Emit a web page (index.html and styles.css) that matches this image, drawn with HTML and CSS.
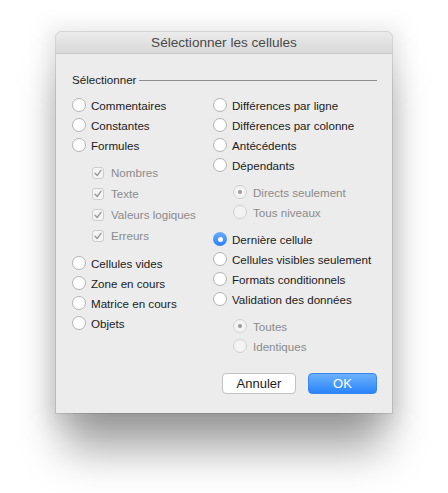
FILE: index.html
```html
<!DOCTYPE html>
<html lang="fr">
<head>
<meta charset="utf-8">
<link rel="stylesheet" href="styles.css">
</head>
<body>
<div class="window">
  <div class="titlebar">Sélectionner les cellules</div>
  <div class="content">
    <div class="group-head"><span>Sélectionner</span><span class="rule"></span></div>
    <div class="cols">
      <div class="col col-left">
        <div class="row"><span class="radio"></span>Commentaires</div>
        <div class="row"><span class="radio"></span>Constantes</div>
        <div class="row"><span class="radio"></span>Formules</div>
        <div class="sub">
          <div class="row crow dis"><span class="check"><svg viewBox="0 0 12 12" width="12" height="12"><path d="M3 6.2 L5.2 8.5 L9 3.3" fill="none" stroke="#9a9a9a" stroke-width="1.4" stroke-linecap="round" stroke-linejoin="round"/></svg></span>Nombres</div>
          <div class="row crow dis"><span class="check"><svg viewBox="0 0 12 12" width="12" height="12"><path d="M3 6.2 L5.2 8.5 L9 3.3" fill="none" stroke="#9a9a9a" stroke-width="1.4" stroke-linecap="round" stroke-linejoin="round"/></svg></span>Texte</div>
          <div class="row crow dis"><span class="check"><svg viewBox="0 0 12 12" width="12" height="12"><path d="M3 6.2 L5.2 8.5 L9 3.3" fill="none" stroke="#9a9a9a" stroke-width="1.4" stroke-linecap="round" stroke-linejoin="round"/></svg></span>Valeurs logiques</div>
          <div class="row crow dis"><span class="check"><svg viewBox="0 0 12 12" width="12" height="12"><path d="M3 6.2 L5.2 8.5 L9 3.3" fill="none" stroke="#9a9a9a" stroke-width="1.4" stroke-linecap="round" stroke-linejoin="round"/></svg></span>Erreurs</div>
        </div>
        <div class="block">
          <div class="row"><span class="radio"></span>Cellules vides</div>
          <div class="row"><span class="radio"></span>Zone en cours</div>
          <div class="row"><span class="radio"></span>Matrice en cours</div>
          <div class="row"><span class="radio"></span>Objets</div>
        </div>
      </div>
      <div class="col col-right">
        <div class="row"><span class="radio"></span>Différences par ligne</div>
        <div class="row"><span class="radio"></span>Différences par colonne</div>
        <div class="row"><span class="radio"></span>Antécédents</div>
        <div class="row"><span class="radio"></span>Dépendants</div>
        <div class="sub">
          <div class="row dis"><span class="radio rdis on"></span>Directs seulement</div>
          <div class="row dis"><span class="radio rdis"></span>Tous niveaux</div>
        </div>
        <div class="block">
          <div class="row"><span class="radio sel"></span>Dernière cellule</div>
          <div class="row"><span class="radio"></span>Cellules visibles seulement</div>
          <div class="row"><span class="radio"></span>Formats conditionnels</div>
          <div class="row"><span class="radio"></span>Validation des données</div>
        </div>
        <div class="sub">
          <div class="row dis"><span class="radio rdis on"></span>Toutes</div>
          <div class="row dis"><span class="radio rdis"></span>Identiques</div>
        </div>
      </div>
    </div>
    <div class="buttons">
      <button class="btn">Annuler</button>
      <button class="btn primary">OK</button>
    </div>
  </div>
</div>
</body>
</html>
```
FILE: styles.css
```css
html, body {
  margin: 0;
  padding: 0;
  background: #ffffff;
}
body {
  padding: 32px 0 0 56px;
  font-family: "Liberation Sans", Arial, sans-serif;
  font-size: 11.6px;
  color: #1b1b1b;
  height: 493px;
  box-sizing: border-box;
}
.window {
  position: relative;
  z-index: 0;
  width: 336px;
  height: 381px;
  box-sizing: border-box;
  background: #ececec;
  border-radius: 5px 5px 0 0;
  outline: 1px solid rgba(0,0,0,0.10);
  display: flex;
  flex-direction: column;
}
.window::before {
  content: "";
  position: absolute;
  z-index: -1;
  left: 8px;
  right: 8px;
  top: 40px;
  bottom: -36px;
  background: rgba(0,0,0,0.36);
  filter: blur(22px);
}
.window::after {
  content: "";
  position: absolute;
  z-index: -2;
  left: -8px;
  right: -8px;
  top: -5px;
  bottom: -10px;
  background: rgba(0,0,0,0.09);
  filter: blur(10px);
}
.titlebar {
  height: 21px;
  border-bottom: 1px solid #c6c6c6;
  border-radius: 5px 5px 0 0;
  background: linear-gradient(#ececec, #d8d8d8);
  text-align: center;
  font-size: 13.6px;
  line-height: 22px;
  color: #4a4a4a;
}
.content {
  padding: 18px 15px 0 16px;
  display: flex;
  flex-direction: column;
  flex: 1;
  background: #ececec;
}
.group-head {
  display: flex;
  align-items: center;
  height: 14px;
}
.group-head .rule {
  flex: 1;
  height: 1px;
  background: #8e8e8e;
  margin: 3px 0 0 3px;
}
.cols {
  display: flex;
  margin-top: 9px;
}
.col-left { width: 141px; }
.col-right { flex: 1; }
.row {
  height: 20px;
  display: flex;
  align-items: center;
  white-space: nowrap;
}
.crow { height: 21px; }
.sub {
  margin: 7px 0 0 20px;
}
.block { margin-top: 7px; }
.dis { color: #8b8b8b; }
.radio {
  width: 14px;
  height: 14px;
  box-sizing: border-box;
  border-radius: 50%;
  border: 1px solid #b3b3b3;
  background: #ffffff;
  margin-right: 5px;
  flex: none;
  display: flex;
  align-items: center;
  justify-content: center;
}
.radio.rdis {
  border-color: #d0d0d0;
  background: #f3f3f3;
  margin-right: 6px;
}
.radio.on::after {
  content: "";
  width: 4px;
  height: 4px;
  border-radius: 50%;
  background: #9a9a9a;
}
.radio.sel {
  border: none;
  background: linear-gradient(#6aaefb, #2c7ff7);
}
.radio.sel::after {
  content: "";
  width: 5px;
  height: 5px;
  border-radius: 50%;
  background: #ffffff;
}
.check {
  width: 12px;
  height: 12px;
  box-sizing: border-box;
  border: 1px solid #cdcdcd;
  border-radius: 3px;
  background: #f4f4f4;
  margin-right: 7px;
  flex: none;
  display: flex;
  align-items: center;
  justify-content: center;
}
.check svg { display: block; flex: none; }
.buttons {
  display: flex;
  justify-content: flex-end;
  gap: 12px;
  margin-top: 17px;
}
.btn {
  height: 21px;
  box-sizing: border-box;
  font-family: "Liberation Sans", Arial, sans-serif;
  font-size: 13px;
  border-radius: 4px;
  padding: 0;
  line-height: 19px;
}
.btn:first-child {
  width: 74px;
  background: #ffffff;
  border: 1px solid #c2c2c2;
  color: #1b1b1b;
}
.btn.primary {
  width: 69px;
  background: linear-gradient(#6cb2fb, #2a83fa);
  border: 1px solid #3a86ef;
  color: #ffffff;
}
```
